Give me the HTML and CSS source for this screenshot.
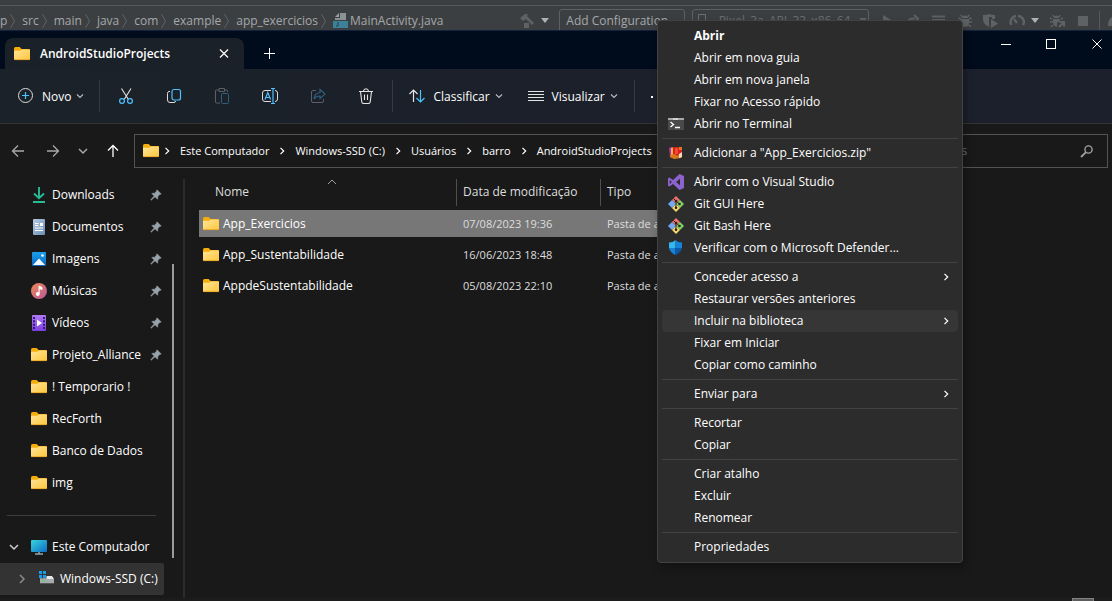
FILE: index.html
```html
<!DOCTYPE html>
<html lang="pt-BR">
<head>
<meta charset="utf-8">
<title>AndroidStudioProjects</title>
<link rel="stylesheet" href="styles.css">
</head>
<body>
<svg class="defs" aria-hidden="true">
  <defs>
    <linearGradient id="g-folder" x1="0" y1="0" x2="1" y2="1"><stop offset="0" stop-color="#ffe69a"/><stop offset="1" stop-color="#ffc53a"/></linearGradient>
    <linearGradient id="g-doc" x1="0" y1="0" x2="1" y2="1"><stop offset="0" stop-color="#b5cbe4"/><stop offset="1" stop-color="#6a8db5"/></linearGradient>
    <linearGradient id="g-img" x1="0" y1="0" x2="0" y2="1"><stop offset="0" stop-color="#1ba1ec"/><stop offset="1" stop-color="#0c63bd"/></linearGradient>
    <linearGradient id="g-mus" x1="0" y1="0" x2="1" y2="1"><stop offset="0" stop-color="#f08a52"/><stop offset="1" stop-color="#b9579c"/></linearGradient>
    <linearGradient id="g-vid" x1="0" y1="0" x2="0" y2="1"><stop offset="0" stop-color="#b07af5"/><stop offset="1" stop-color="#7c3fe0"/></linearGradient>
    <linearGradient id="g-pc" x1="0" y1="0" x2="1" y2="1"><stop offset="0" stop-color="#35d5e0"/><stop offset="1" stop-color="#0f6cc4"/></linearGradient>
    <symbol id="folder" viewBox="0 0 16 16"><path d="M0 2.500Q0 1 1.500 1H5.600L7.600 3H15Q16 3 16 4V8H0z" fill="#f5ad0c"/><path d="M0 5.200Q0 4.800.6 4.800H6.200L8 3.400H15.200Q16 3.400 16 4.200V13Q16 14 15 14H1Q0 14 0 13z" fill="url(#g-folder)"/><path d="M.4 13.600H15.600" stroke="#e8a21d" stroke-width=".8"/></symbol>
    <symbol id="pin" viewBox="0 0 12 12"><path d="M7 .8 11.200 5 9.600 5.600 7.800 7.500 7.600 10.200 5 7.800 1.200 11.200.8 10.800 4.200 7 1.800 4.400 4.500 4.200 6.400 2.400z" fill="#98a2ab" stroke="#98a2ab" stroke-width=".6"/></symbol>
    <symbol id="down" viewBox="0 0 8 8"><path d="M1 2.500 4 5.500 7 2.500" fill="none" stroke="currentColor" stroke-width="1.200"/></symbol>
    <symbol id="right" viewBox="0 0 8 8"><path d="M2.500 .8 5.700 4 2.500 7.200" fill="none" stroke="currentColor" stroke-width="1.200"/></symbol>
    <symbol id="crumb" viewBox="0 0 5 16"><path d="M.5 1 4.500 8 .5 15" fill="none" stroke="#606365"/></symbol>
    <symbol id="git" viewBox="0 0 16 16"><path d="M8 0 12 4 8 8 4 4z" fill="#f0706f"/><path d="M4 4 8 8 4 12 0 8z" fill="#74a8f5"/><path d="M12 4 16 8 12 12 8 8z" fill="#82d660"/><path d="M8 8 12 12 8 16 4 12z" fill="#f7d96b"/><path d="M5.500 2.500 8 5V12M8 5 11.500 8" fill="none" stroke="#2a2420" stroke-width="1"/><circle cx="8" cy="11.800" r="1.300" fill="#222"/><circle cx="11.500" cy="8" r="1.300" fill="#222"/><circle cx="8" cy="5" r="1.300" fill="#222"/></symbol>
    <symbol id="bug" viewBox="0 0 16 16"><path d="M5 3.500 3.800 2M11 3.500 12.200 2M4 6 1.500 5M12 6 14.500 5M4 9H1M12 9H15M4.500 12 2 13.500M11.500 12 14 13.500" stroke="currentColor" stroke-width="1.500"/><path d="M4.500 5Q5 2.500 8 2.500T11.500 5zM4 6H12V10.500Q11 14 8 14T4 10.500z" fill="currentColor"/></symbol>
  </defs>
</svg>

<header class="ide">
  <div class="ide-row">
    <nav class="ide-path" aria-label="Arquivo">
      <span>p</span><svg class="crumb"><use href="#crumb"/></svg>
      <span>src</span><svg class="crumb"><use href="#crumb"/></svg>
      <span>main</span><svg class="crumb"><use href="#crumb"/></svg>
      <span>java</span><svg class="crumb"><use href="#crumb"/></svg>
      <span>com</span><svg class="crumb"><use href="#crumb"/></svg>
      <span>example</span><svg class="crumb"><use href="#crumb"/></svg>
      <span>app_exercicios</span><svg class="crumb"><use href="#crumb"/></svg>
      <svg class="i16" viewBox="0 0 16 16"><path d="M7 0H13V7H2V5H7z" fill="#8b9296"/><path d="M2 4 6 0V4z" fill="#9aa1a5"/><path d="M0 8H15V15H0z" fill="#3c8199"/><path d="M5 9V12.500Q5 13.500 3 13" fill="none" stroke="#1f3d48"/></svg>
      <span class="file">MainActivity.java</span>
    </nav>
    <div class="ide-tools">
      <svg class="i16 dim" viewBox="0 0 16 16"><path d="M1 5 6 1H9L8 3 15 10 13 12 7 6 4 8zM5 10H10V15H5z" fill="currentColor"/></svg>
      <svg class="tri" viewBox="0 0 8 5"><path d="M0 0H8L4 5z" fill="currentColor"/></svg>
      <button class="combo combo-config">Add Configuration...</button>
      <button class="combo combo-device"><svg class="i16" viewBox="0 0 16 16"><path d="M4.500 1.500H11.500V14.500H4.500z" fill="none" stroke="currentColor"/></svg>Pixel_3a_API_33_x86_64<svg class="tri" viewBox="0 0 8 5"><path d="M0 0H8L4 5z" fill="currentColor"/></svg></button>
      <svg class="i16 dim" viewBox="0 0 16 16"><path d="M4 2 14 8 4 14z" fill="currentColor"/></svg>
      <svg class="i16 dim" viewBox="0 0 16 16"><path d="M3 11Q2 5 10 5.500M9 2 13 5.500 9 9.500M3 14H7" fill="none" stroke="currentColor" stroke-width="2"/></svg>
      <svg class="i16 dim" viewBox="0 0 16 16"><path d="M1 3.500H14M1 7H14M1 10.500H14" stroke="currentColor" stroke-width="2"/></svg>
      <svg class="i16 dim"><use href="#bug"/></svg>
      <svg class="i16 dim" viewBox="0 0 16 16"><path d="M0 2Q4 2 6 1Q8 2 12 2V6H9V4H6V12L7 14Q0 12 0 6z" fill="currentColor"/><path d="M8 6 15 10.500 8 15z" fill="currentColor"/></svg>
      <svg class="i16 dim" viewBox="0 0 16 16"><path d="M2.500 12A6 6 0 0 1 7 3M9 3A6 6 0 0 1 14 12M8 10 5 6" fill="none" stroke="currentColor" stroke-width="2.400"/></svg>
      <svg class="tri" viewBox="0 0 8 5"><path d="M0 0H8L4 5z" fill="currentColor"/></svg>
      <svg class="i16 dim" viewBox="0 0 16 16"><path d="M1 5 3 6M1 9H4M2 14 4 12M4 2 5 4M11 2 10 4M14 5 12 6" stroke="currentColor" stroke-width="1.500"/><path d="M4.500 5Q5 2.500 7.500 2.500T10.500 5zM4 6H11V8L8 10V14Q4 13 4 9z" fill="currentColor"/><path d="M10 14 14 10M10.500 9H15V13.500" fill="none" stroke="currentColor" stroke-width="2"/></svg>
      <svg class="i16 dim" viewBox="0 0 16 16"><path d="M3 3H13V13H3z" fill="currentColor"/></svg>
      <span class="ide-sep"></span>
      <svg class="i16 dim" viewBox="0 0 4 16"><path d="M0 13Q0 6 4 4V13z" fill="currentColor"/></svg>
    </div>
  </div>
</header>

<main class="window">
  <div class="titlebar">
    <div class="tab">
      <svg class="i16"><use href="#folder"/></svg>
      <span class="tab-title">AndroidStudioProjects</span>
      <button class="tab-close" aria-label="Fechar guia"><svg class="i16" viewBox="0 0 16 16"><path d="M4 3.500 12 11.500M12 3.500 4 11.500" stroke="#fff" stroke-width="1.200"/></svg></button>
    </div>
    <button class="tab-new" aria-label="Nova guia"><svg class="i16" viewBox="0 0 16 16"><path d="M3 7.500H14M8.500 2V13" stroke="#fff"/></svg></button>
    <div class="controls">
      <button aria-label="Minimizar"><svg class="i16" viewBox="0 0 16 16"><path d="M4 7.500H14" stroke="#fff"/></svg></button>
      <button aria-label="Maximizar"><svg class="i16" viewBox="0 0 16 16"><rect x="3.500" y="2.500" width="9" height="9" fill="none" stroke="#fff"/></svg></button>
      <button class="close" aria-label="Fechar"><svg class="i16" viewBox="0 0 16 16"><path d="M3.500 2.500 12.500 11.500M12.500 2.500 3.500 11.500" stroke="#fff"/></svg></button>
    </div>
  </div>

  <div class="toolbar">
    <button class="cmd new"><svg class="i16" viewBox="0 0 16 16"><circle cx="7.500" cy="7.500" r="7" fill="none" stroke="#dcdcdc"/><path d="M4 7.500H11M7.500 4V11" stroke="#4cc2ff" stroke-width="1.200"/></svg><span>Novo</span><svg class="chev"><use href="#down"/></svg></button>
    <span class="vsep"></span>
    <div class="tools">
      <button aria-label="Recortar"><svg class="i16" viewBox="0 0 16 16"><path d="M3.500 .5 10.300 11.200M13 .5 6.300 11.200" stroke="#e4e4e4" stroke-width="1.100"/><circle cx="4" cy="13" r="2.400" fill="none" stroke="#4cc2ff" stroke-width="1.200"/><circle cx="12" cy="13" r="2.400" fill="none" stroke="#4cc2ff" stroke-width="1.200"/></svg></button>
      <button aria-label="Copiar"><svg class="i16" viewBox="0 0 16 16"><path d="M4 3.500H3Q1.500 3.500 1.500 5.500V12Q1.500 14.500 4 14.500H8Q9.500 14.500 9.500 13" fill="none" stroke="#dcdcdc"/><rect x="6" y="1.500" width="8.500" height="10.500" rx="2" fill="none" stroke="#4cc2ff" stroke-width="1.200"/></svg></button>
      <button aria-label="Colar"><svg class="i16" viewBox="0 0 16 16"><path d="M5 2H2.500Q1.500 2 1.500 3V14Q1.500 15 2.500 15H6M11 2H12.500Q13.500 2 13.500 3V4M5 .5H10.500V3.500H5z" fill="none" stroke="#5c6065"/><rect x="7.500" y="5.500" width="7" height="10" rx="1" fill="none" stroke="#2e5f7b"/></svg></button>
      <button aria-label="Renomear"><svg class="i16" viewBox="0 0 16 16"><path d="M9 2.500H3Q.5 2.500 .5 5V11Q.5 13.500 3 13.500H9M13 2.500Q15.500 2.500 15.500 5V11Q15.500 13.500 13 13.500" fill="none" stroke="#dcdcdc"/><path d="M3 11.500 5.800 4.500 8.600 11.500M4 9.500H7.600M11 .500V15.500M9 .500H13M9 15.500H13" fill="none" stroke="#4cc2ff" stroke-width="1.200"/></svg></button>
      <button aria-label="Compartilhar"><svg class="i16" viewBox="0 0 16 16"><path d="M6 2.500H3Q1.500 2.500 1.500 4V13Q1.500 14.500 3 14.500H12Q13.500 14.500 13.500 13V11" fill="none" stroke="#5c6065"/><path d="M10 1.500 15 6 10 10.500V8Q6 8 4 11Q4.500 5 10 4.500z" fill="none" stroke="#2e5f7b" stroke-width="1.200"/></svg></button>
      <button aria-label="Excluir"><svg class="i16" viewBox="0 0 16 16"><path d="M1 3.500H15M5.500 3Q6 .8 8 .8T10.500 3M2.500 3.500 3.800 14Q4 15.500 5.500 15.500H10.500Q12 15.500 12.200 14L13.500 3.500M6.500 6.500V12M9.500 6.500V12" fill="none" stroke="#e4e4e4" stroke-width="1.100"/></svg></button>
    </div>
    <span class="vsep"></span>
    <button class="cmd"><svg class="i16" viewBox="0 0 16 16"><path d="M.5 6 4.500 2 8.500 6M4.500 2V14" fill="none" stroke="#e4e4e4" stroke-width="1.200"/><path d="M7.500 10 11.500 14 15.500 10M11.500 14V2" fill="none" stroke="#4cc2ff" stroke-width="1.200"/></svg><span>Classificar</span><svg class="chev"><use href="#down"/></svg></button>
    <button class="cmd view"><svg class="i16" viewBox="0 0 16 16"><path d="M0 3.500H16M0 6.500H16M0 9.500H16M0 12.500H16" stroke="#e4e4e4"/></svg><span>Visualizar</span><svg class="chev"><use href="#down"/></svg></button>
    <span class="vsep"></span>
    <button class="more" aria-label="Ver mais"><svg class="i16" viewBox="0 0 16 16"><path d="M0 8H2V10H0zM6 8H8V10H6zM12 8H14V10H12z" fill="#fff"/></svg></button>
  </div>

  <div class="navbar">
    <button class="back" aria-label="Voltar"><svg class="i16" viewBox="0 0 16 16"><path d="M14 8H2.500M8 2.500 2.500 8 8 13.500" fill="none" stroke="#a8a8a8" stroke-width="1.300"/></svg></button>
    <button class="fwd" aria-label="Avançar"><svg class="i16" viewBox="0 0 16 16"><path d="M2 8H13.500M8 2.500 13.500 8 8 13.500" fill="none" stroke="#a8a8a8" stroke-width="1.300"/></svg></button>
    <button class="recent" aria-label="Recentes"><svg class="i16" viewBox="0 0 16 16"><path d="M4 6 8 10 12 6" fill="none" stroke="#a8a8a8" stroke-width="1.500"/></svg></button>
    <button class="up" aria-label="Acima"><svg class="i16" viewBox="0 0 16 16"><path d="M8 14V2.500M3 7.500 8 2.500 13 7.500" fill="none" stroke="#fff" stroke-width="1.300"/></svg></button>
    <div class="address">
      <svg class="i16"><use href="#folder"/></svg><svg class="sep"><use href="#right"/></svg>
      <a href="#">Este Computador</a><svg class="sep"><use href="#right"/></svg>
      <a href="#">Windows-SSD (C:)</a><svg class="sep"><use href="#right"/></svg>
      <a href="#">Usuários</a><svg class="sep"><use href="#right"/></svg>
      <a href="#">barro</a><svg class="sep"><use href="#right"/></svg>
      <a href="#">AndroidStudioProjects</a>
    </div>
    <label class="search">
      <input type="text" aria-label="Pesquisar" placeholder="Pesquisar em AndroidStudioProjects">
      <svg class="i16" viewBox="0 0 16 16"><circle cx="9.500" cy="6.500" r="3.600" fill="none" stroke="#a0a0a0" stroke-width="1.400"/><path d="M7 9.200 2 14" stroke="#a0a0a0" stroke-width="1.800"/></svg>
    </label>
  </div>

  <div class="content">
    <nav class="sidebar" aria-label="Pastas">
      <ul>
        <li><a href="#"><svg class="i16" viewBox="0 0 16 16"><path d="M8 0V11M3 6.500 8 11.300 13 6.500M2 15H14" fill="none" stroke="#26bb95" stroke-width="1.900"/></svg><span>Downloads</span><svg class="pin"><use href="#pin"/></svg></a></li>
        <li><a href="#"><svg class="i16" viewBox="0 0 16 16"><rect x="2" width="12" height="16" rx="1" fill="url(#g-doc)"/><path d="M4 4.500H7.500M4 6.500H7.500M4 9H12M4 11.500H12" stroke="#fff"/><path d="M9 4H12V7H9z" fill="#fff"/></svg><span>Documentos</span><svg class="pin"><use href="#pin"/></svg></a></li>
        <li><a href="#"><svg class="i16" viewBox="0 0 16 16"><rect x="1" y="1" width="14" height="14" rx="1" fill="url(#g-img)"/><path d="M2 14 8 7.500 14 14z" fill="#f3fbff"/><circle cx="11.500" cy="4.500" r="1.300" fill="#fff"/></svg><span>Imagens</span><svg class="pin"><use href="#pin"/></svg></a></li>
        <li><a href="#"><svg class="i16" viewBox="0 0 16 16"><circle cx="8" cy="8" r="8" fill="url(#g-mus)"/><path d="M8 11V3L11 4.500V6.500L8.500 5.500" fill="#fff" stroke="#fff"/><circle cx="6.800" cy="11" r="1.900" fill="#fff"/></svg><span>Músicas</span><svg class="pin"><use href="#pin"/></svg></a></li>
        <li><a href="#"><svg class="i16" viewBox="0 0 16 16"><rect x="1" width="14" height="16" rx="1" fill="url(#g-vid)"/><path d="M6 4.500 11 8 6 11.500z" fill="#fff"/><path d="M2 2H4V4H2zM2 5.300H4V7.300H2zM2 8.700H4V10.700H2zM2 12H4V14H2zM12 2H14V4H12zM12 5.300H14V7.300H12zM12 8.700H14V10.700H12zM12 12H14V14H12z" fill="#3a1b74"/></svg><span>Vídeos</span><svg class="pin"><use href="#pin"/></svg></a></li>
        <li><a href="#"><svg class="i16"><use href="#folder"/></svg><span>Projeto_Alliance</span><svg class="pin"><use href="#pin"/></svg></a></li>
        <li><a href="#"><svg class="i16"><use href="#folder"/></svg><span>! Temporario !</span></a></li>
        <li><a href="#"><svg class="i16"><use href="#folder"/></svg><span>RecForth</span></a></li>
        <li><a href="#"><svg class="i16"><use href="#folder"/></svg><span>Banco de Dados</span></a></li>
        <li><a href="#"><svg class="i16"><use href="#folder"/></svg><span>img</span></a></li>
        <li class="rule" role="separator"></li>
        <li><a href="#" class="tree"><svg class="twisty" viewBox="0 0 12 12"><path d="M2 4 6 8 10 4" fill="none" stroke="#d0d0d0" stroke-width="1.500"/></svg><svg class="i16" viewBox="0 0 16 16"><rect y="1" width="16" height="12" rx="1" fill="url(#g-pc)"/><path d="M4 15H12M8 13V15" stroke="#8fa6b4" stroke-width="1.500"/></svg><span>Este Computador</span></a></li>
        <li><a href="#" class="tree child current"><svg class="twisty" viewBox="0 0 12 12"><path d="M4 2 8 6 4 10" fill="none" stroke="#8a8a8a" stroke-width="1.500"/></svg><svg class="i16" viewBox="0 0 16 16"><path d="M1 5H13L15 8H1z" fill="#e8e8e8"/><path d="M0 0H7.500V7.500H0z" fill="#333"/><path d="M0 0H3V3H0zM4 0H7V3H4zM0 4H3V7H0zM4 4H7V7H4z" fill="#1c9be8"/><rect x="1" y="8" width="14" height="4" fill="#a7abae"/><path d="M3 10H6" stroke="#3be05a"/><path d="M1 12.500H15" stroke="#555"/></svg><span>Windows-SSD (C:)</span></a></li>
      </ul>
      <div class="scroll"></div>
    </nav>
    <section class="files">
      <table>
        <colgroup><col class="c-name"><col class="c-date"><col class="c-type"></colgroup>
        <thead><tr><th><span class="name-head">Nome<svg class="sort" viewBox="0 0 8 8"><path d="M0 6 4 2 8 6" fill="none" stroke="#a0a0a0"/></svg></span></th><th>Data de modificação</th><th>Tipo</th></tr></thead>
        <tbody>
          <tr class="selected"><td><span class="name"><svg class="i16"><use href="#folder"/></svg>App_Exercicios</span></td><td>07/08/2023 19:36</td><td>Pasta de arquivos</td></tr>
          <tr><td><span class="name"><svg class="i16"><use href="#folder"/></svg>App_Sustentabilidade</span></td><td>16/06/2023 18:48</td><td>Pasta de arquivos</td></tr>
          <tr><td><span class="name"><svg class="i16"><use href="#folder"/></svg>AppdeSustentabilidade</span></td><td>05/08/2023 22:10</td><td>Pasta de arquivos</td></tr>
        </tbody>
      </table>
    </section>
  </div>
  <footer class="status"><button aria-label="Detalhes"></button></footer>
</main>

<div class="menu" role="menu">
  <button role="menuitem" class="default"><span>Abrir</span></button>
  <button role="menuitem"><span>Abrir em nova guia</span></button>
  <button role="menuitem"><span>Abrir em nova janela</span></button>
  <button role="menuitem"><span>Fixar no Acesso rápido</span></button>
  <button role="menuitem"><svg class="i16" viewBox="0 0 16 16"><rect y="2" width="16" height="12" fill="#4a4a4a"/><path d="M0 2H16V4H0z" fill="#a8a8a8"/><path d="M5 2H10V4H5z" fill="#d2d2d2"/><path d="M2.500 6 5.500 8.500 2.500 11M7 11.500H12" fill="none" stroke="#fff" stroke-width="1.400"/></svg><span>Abrir no Terminal</span></button>
  <hr>
  <button role="menuitem"><svg class="i16" viewBox="0 0 16 16"><path d="M1 3 4 2V13L2 12z" fill="#a535c9"/><path d="M3 3 6 2V13L3 12z" fill="#f2b632"/><path d="M5 2H14V13H5z" fill="#d8201b"/><path d="M7 3H10V9H7z" fill="#f4463c"/><path d="M11 2H14V5H11zM2 10 7 9 9 11 13 8V13L6 14 2 12z" fill="#d9791b"/><path d="M11 9 14 7V12L11 13z" fill="#f3dfc2"/></svg><span>Adicionar a "App_Exercicios.zip"</span></button>
  <hr>
  <button role="menuitem"><svg class="i16" viewBox="0 0 16 16"><path d="M11.500 0 16 2V14L11.500 16 5 10 1.500 12.500 0 11.500V4.500L1.500 3.500 5 6zM12 4.800 8 8 12 11.200zM1.800 6V10L3.800 8z" fill="#8c62cf" fill-rule="evenodd"/></svg><span>Abrir com o Visual Studio</span></button>
  <button role="menuitem"><svg class="i16"><use href="#git"/></svg><span>Git GUI Here</span></button>
  <button role="menuitem"><svg class="i16"><use href="#git"/></svg><span>Git Bash Here</span></button>
  <button role="menuitem"><svg class="i16" viewBox="0 0 16 16"><path d="M7.500 0V8H1V2.500Q5 2.500 7.500 0z" fill="#35b8f1"/><path d="M7.500 0Q10 2.500 14 2.500V8H7.500z" fill="#1583d8"/><path d="M1 8H7.500V15Q2 12.500 1 8z" fill="#1583d8"/><path d="M14 8H7.500V15Q13 12.500 14 8z" fill="#0c59a8"/></svg><span>Verificar com o Microsoft Defender...</span></button>
  <hr>
  <button role="menuitem"><span>Conceder acesso a</span><svg class="sub"><use href="#right"/></svg></button>
  <button role="menuitem"><span>Restaurar versões anteriores</span></button>
  <button role="menuitem" class="hover"><span>Incluir na biblioteca</span><svg class="sub"><use href="#right"/></svg></button>
  <button role="menuitem"><span>Fixar em Iniciar</span></button>
  <button role="menuitem"><span>Copiar como caminho</span></button>
  <hr>
  <button role="menuitem"><span>Enviar para</span><svg class="sub"><use href="#right"/></svg></button>
  <hr>
  <button role="menuitem"><span>Recortar</span></button>
  <button role="menuitem"><span>Copiar</span></button>
  <hr>
  <button role="menuitem"><span>Criar atalho</span></button>
  <button role="menuitem"><span>Excluir</span></button>
  <button role="menuitem"><span>Renomear</span></button>
  <hr>
  <button role="menuitem"><span>Propriedades</span></button>
</div>
</body>
</html>
```
FILE: styles.css
```css
* { box-sizing: border-box; }

body {
  margin: 0;
  min-height: 100vh;
  display: flex;
  flex-direction: column;
  background: #191919;
  color: #fff;
  font: 12px/16px "Open Sans", "Noto Sans", sans-serif;
  overflow: hidden;
}

button {
  margin: 0;
  padding: 0;
  border: 0;
  background: none;
  color: inherit;
  font: inherit;
  display: flex;
  align-items: center;
  justify-content: center;
}

a { color: inherit; text-decoration: none; }
svg { flex: none; display: block; }
.defs { position: absolute; width: 0; height: 0; }
.i16 { width: 16px; height: 16px; }

/* IDE strip behind the window */
.ide {
  height: 30px;
  padding-top: 5px;
  overflow: hidden;
  background: #3c3f41;
  color: #a4a8aa;
}
.ide-row {
  height: 30px;
  display: flex;
  align-items: center;
  border-top: 1px solid #555759;
  white-space: nowrap;
}
.ide-path { flex: 1; min-width: 0; display: flex; align-items: center; }
.crumb { width: 5px; height: 16px; margin: 0 7px 0 3px; }
.file { margin-left: 1px; }
.ide-tools { flex: none; display: flex; align-items: center; gap: 10px; }
.dim { color: #5f6263; }
.tri { width: 8px; height: 5px; margin-left: -4px; color: #afb1b3; }
.combo { height: 24px; border: 1px solid #5e6162; border-radius: 3px; }
.combo-config { width: 126px; }
.combo-device { width: 177px; margin-left: -3px; gap: 9px; color: #6c6f71; }
.combo-device .tri { margin: 0; color: #5f6263; }
.ide-sep { width: 1px; height: 20px; margin: 0 -2px; background: #56595b; }
.ide-tools > :last-child { width: 4px; }

/* Explorer window */
.window { flex: 1; display: flex; flex-direction: column; }
.titlebar {
  height: 39px;
  display: flex;
  padding-left: 5px;
  background: #000b1b;
  border-top: 1px solid #12233f;
}
.tab {
  width: 239px;
  margin-top: 7px;
  padding: 0 12px 0 9px;
  display: flex;
  align-items: center;
  border-radius: 8px 8px 0 0;
  background: #1b2128;
}
.tab-title { flex: 1; margin-left: 10px; font-weight: 600; }
.tab-new { width: 50px; margin-top: 8px; }
.controls { margin-left: auto; display: flex; height: 28px; }
.controls button { width: 46px; }
.controls .close { width: 38px; padding-left: 8px; }

.toolbar {
  height: 55px;
  display: flex;
  align-items: center;
  background: linear-gradient(90deg, #1b2229, #1b202a 50%, #1c202c);
  border-bottom: 1px solid #343436;
}
.cmd { padding: 0 16px; height: 32px; }
.cmd span { margin: 0 5px 0 8px; padding-top: 2px; }
.new { padding: 0 15px 0 18px; }
.view { padding-left: 9px; }
.chev { width: 8px; height: 8px; color: #b5b9bd; }
.vsep { width: 1px; height: 32px; background: #343a41; }
.tools { display: flex; padding: 0 2px; }
.tools button { width: 48px; height: 32px; }
.more { width: 48px; height: 32px; }

.navbar { display: flex; align-items: center; padding: 10px 4px 11px 0; }
.back { width: 36px; }
.fwd, .up { width: 34px; }
.recent { width: 26px; }
.address {
  flex: 1;
  min-width: 0;
  height: 34px;
  margin: 0 8px 0 4px;
  padding-left: 8px;
  display: flex;
  align-items: center;
  gap: 9px;
  border: 1px solid #535353;
  overflow: hidden;
  white-space: nowrap;
  font-size: 11px;
}
.address > :first-child { margin-right: -5px; }
.sep { width: 8px; height: 8px; }
.search {
  flex: 0 0 364px;
  height: 34px;
  padding: 0 12px 0 18px;
  display: flex;
  align-items: center;
  border: 1px solid #535353;
}
.search input {
  flex: 1;
  min-width: 0;
  padding: 0;
  border: 0;
  outline: 0;
  background: none;
  color: #fff;
  font: inherit;
}
.search input::placeholder { color: #6e6e6e; opacity: 1; }

.content { flex: 1; display: flex; }
.sidebar { width: 185px; display: flex; border-right: 2px solid #2b2b2b; }
.sidebar ul { width: 164px; margin: 0; padding: 0; list-style: none; }
.sidebar a {
  height: 32px;
  padding: 0 2px 0 31px;
  display: flex;
  align-items: center;
  gap: 5px;
  white-space: nowrap;
}
.sidebar .tree { padding-left: 8px; }
.sidebar .child { padding-left: 16px; }
.sidebar .current { background: #333; border-radius: 0 2px 2px 0; }
.twisty { width: 12px; height: 12px; margin-right: 6px; }
.pin { width: 12px; height: 12px; margin-left: auto; }
.rule { height: 32px; padding: 16px 8px 0 7px; }
.rule::before { content: ""; display: block; height: 1px; background: #3c3c3c; }
.scroll { width: 2px; height: 294px; margin: 85px 0 0 8px; background: #9a9a9a; }

.files { flex: 1; padding-left: 14px; }
table { table-layout: fixed; width: 700px; margin-top: -4px; border-spacing: 0 4px; }
.c-name { width: 257px; }
.c-date { width: 144px; }
th, td { height: 27px; padding: 0 0 0 6px; text-align: left; font-weight: 400; color: #dedede; border-left: 1px solid transparent; }
td { font-size: 11px; }
th { padding-bottom: 2px; border-left-color: #4f4f4f; }
th:first-child { padding-left: 15px; border-left-color: transparent; }
td:first-child { padding-left: 3px; color: #fff; font-size: 12px; }
.name { display: flex; align-items: center; gap: 4px; }
.name-head { position: relative; display: block; }
.sort { position: absolute; top: -6px; left: 113px; width: 8px; height: 8px; }
.selected td { background: #777; }

.status { height: 3px; display: flex; justify-content: flex-end; padding-right: 18px; overflow: hidden; background: #1c1c1c; }
.status button { width: 22px; height: 20px; border: 1px solid #838383; background: #5c5c5c; }

/* Context menu */
.menu {
  position: absolute;
  top: 20px;
  left: 657px;
  width: 306px;
  padding: 4px;
  background: #2c2c2c;
  border: 1px solid #424242;
  border-radius: 4px;
  box-shadow: 2px 4px 8px rgba(0, 0, 0, .3);
}
.menu button {
  width: 100%;
  height: 22px;
  padding: 0 8px 0 6px;
  gap: 10px;
  justify-content: flex-start;
  border-radius: 4px;
  white-space: nowrap;
}
.menu button > span:first-child { margin-left: 26px; }
.menu .default { font-weight: 700; }
.menu .hover { background: #363636; }
.menu hr { margin: 3px 0; border: 0; height: 1px; background: #424242; }
.sub { width: 8px; height: 8px; margin-left: auto; }
```
